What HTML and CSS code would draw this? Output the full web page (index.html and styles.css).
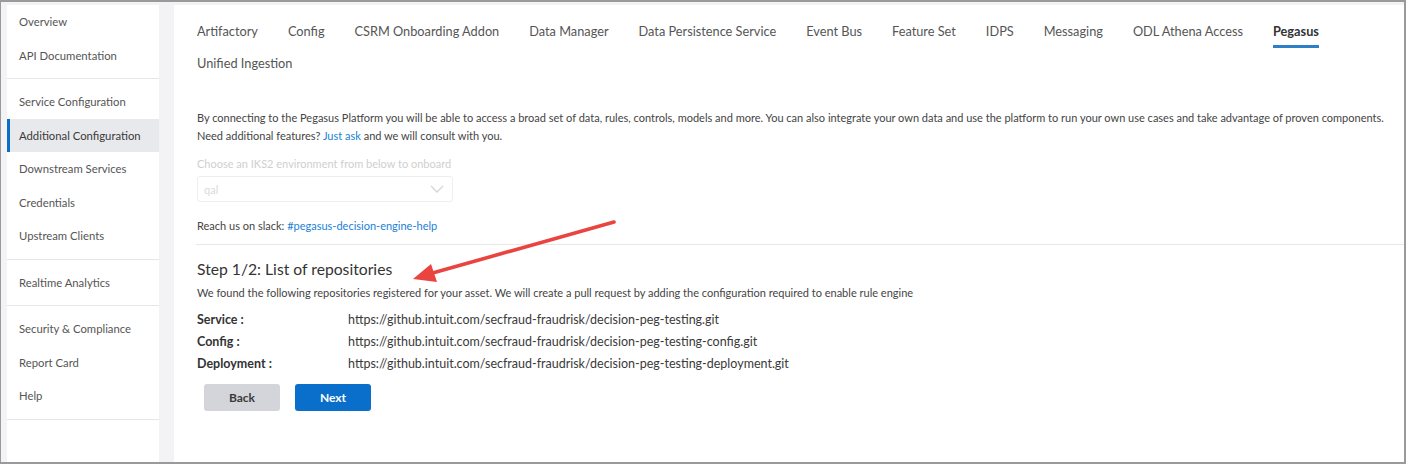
FILE: index.html
```html
<!DOCTYPE html>
<html>
<head>
<meta charset="utf-8">
<link rel="stylesheet" href="styles.css">
</head>
<body>
<div class="frame">
  <nav class="sidebar">
    <div class="group first">
      <div class="item">Overview</div>
      <div class="item">API Documentation</div>
    </div>
    <div class="group">
      <div class="item">Service Configuration</div>
      <div class="item active">Additional Configuration</div>
      <div class="item">Downstream Services</div>
      <div class="item">Credentials</div>
      <div class="item">Upstream Clients</div>
    </div>
    <div class="group">
      <div class="item">Realtime Analytics</div>
    </div>
    <div class="group">
      <div class="item">Security &amp; Compliance</div>
      <div class="item">Report Card</div>
      <div class="item">Help</div>
    </div>
  </nav>
  <main class="main">
    <div class="tabs">
      <span class="tab">Artifactory</span>
      <span class="tab">Config</span>
      <span class="tab">CSRM Onboarding Addon</span>
      <span class="tab">Data Manager</span>
      <span class="tab">Data Persistence Service</span>
      <span class="tab">Event Bus</span>
      <span class="tab">Feature Set</span>
      <span class="tab">IDPS</span>
      <span class="tab">Messaging</span>
      <span class="tab">ODL Athena Access</span>
      <span class="tab active">Pegasus</span>
      <span class="tab">Unified Ingestion</span>
    </div>
    <div class="content">
      <p class="intro">By connecting to the Pegasus Platform you will be able to access a broad set of data, rules, controls, models and more. You can also integrate your own data and use the platform to run your own use cases and take advantage of proven components.<br>Need additional features? <a class="link">Just ask</a> and we will consult with you.</p>
      <div class="field-label">Choose an IKS2 environment from below to onboard</div>
      <div class="select">
        <span>qal</span>
        <svg class="chev" width="14" height="8" viewBox="0 0 14 8"><path d="M1 1 L7 7 L13 1" fill="none" stroke="#d6d6d6" stroke-width="1.4"/></svg>
      </div>
      <div class="slack">Reach us on slack: <a class="link">#pegasus-decision-engine-help</a></div>
    </div>
    <div class="divider"></div>
    <div class="content step">
      <h2 class="step-title">Step 1/2: List of repositories</h2>
      <p class="step-desc">We found the following repositories registered for your asset. We will create a pull request by adding the configuration required to enable rule engine</p>
      <div class="repos">
        <div class="repo"><span class="repo-label">Service :</span><span class="repo-url">https://github.intuit.com/secfraud-fraudrisk/decision-peg-testing.git</span></div>
        <div class="repo"><span class="repo-label">Config :</span><span class="repo-url">https://github.intuit.com/secfraud-fraudrisk/decision-peg-testing-config.git</span></div>
        <div class="repo"><span class="repo-label">Deployment :</span><span class="repo-url">https://github.intuit.com/secfraud-fraudrisk/decision-peg-testing-deployment.git</span></div>
      </div>
      <div class="buttons">
        <button class="btn back">Back</button>
        <button class="btn next">Next</button>
      </div>
    </div>
  </main>
  <svg class="arrow" width="1406" height="464" viewBox="0 0 1406 464">
    <line x1="613" y1="220" x2="428" y2="272" stroke="#ea4440" stroke-width="3.6" stroke-linecap="round"/>
    <polygon points="412,277 430,262 436,280" fill="#ea4440"/>
  </svg>
</div>
</body>
</html>
```

FILE: styles.css
```css
* { box-sizing: border-box; }
html, body { margin: 0; padding: 0; }
body {
  font-family: Lato, "Open Sans", sans-serif;
  color: #444;
  background: #fff;
}
.frame {
  position: relative;
  width: 1406px;
  height: 464px;
  border: 1px solid #9a9a9a;
  border-width: 2px 2px 2px 1px;
  background: #f3f3f5;
  display: flex;
  padding: 3px 0 0 6px;
  gap: 15px;
  overflow: hidden;
}
.sidebar {
  width: 152px;
  background: #fff;
  flex-shrink: 0;
}
.group {
  padding: 6px 0;
  border-bottom: 1px solid #e6e6e8;
}
.group.first { padding-top: 0; }
.item {
  height: 33.5px;
  display: flex;
  align-items: center;
  padding-left: 9px;
  font-size: 11.3px;
  color: #555;
  border-left: 3px solid transparent;
}
.item.active {
  background: #e8e9ec;
  border-left-color: #0a6fc4;
  color: #3a3a3a;
}
.main {
  flex: 1;
  background: #fff;
  min-width: 0;
}
.tabs {
  display: flex;
  flex-wrap: wrap;
  column-gap: 30px;
  padding: 11px 60px 0 23px;
}
.tab {
  height: 32px;
  line-height: 30px;
  font-size: 12.75px;
  color: #555;
  border-bottom: 3px solid transparent;
}
.tab.active {
  color: #333;
  font-weight: bold;
  border-bottom-color: #2f7fc6;
}
.content { padding-left: 23px; }
.intro {
  margin: 29px 0 0;
  font-size: 11px;
  line-height: 18px;
  color: #444;
}
.link { color: #1a7fd6; text-decoration: none; }
.field-label {
  margin-top: 11px;
  font-size: 11px;
  color: #cfcfcf;
  line-height: 16px;
}
.select {
  margin-top: 4px;
  width: 256px;
  height: 26px;
  border: 1px solid #eeeeee;
  border-radius: 3px;
  display: flex;
  align-items: center;
  justify-content: space-between;
  padding: 0 8px 0 6px;
  font-size: 11px;
  color: #dadada;
}
.slack {
  margin-top: 16px;
  font-size: 11px;
  line-height: 16px;
  color: #444;
}
.divider {
  margin-top: 10px;
  margin-left: 22px;
  border-top: 1px solid #e8e8e8;
}
.step-title {
  margin: 14px 0 0;
  font-size: 15.7px;
  font-weight: normal;
  color: #333;
  line-height: 20px;
}
.step-desc {
  margin: 7px 0 0;
  font-size: 11px;
  line-height: 14px;
  color: #444;
}
.repos { margin-top: 8px; }
.repo {
  display: flex;
  height: 22px;
  align-items: center;
  font-size: 12.5px;
  color: #333;
}
.repo-label {
  width: 151px;
  font-weight: bold;
}
.repo-url { color: #3a3a3a; }
.buttons {
  display: flex;
  gap: 15px;
  margin-top: 10px;
  padding-left: 7px;
}
.btn {
  width: 76px;
  height: 27px;
  border: none;
  border-radius: 3px;
  font-family: inherit;
  font-size: 12px;
  font-weight: bold;
}
.btn.back { background: #d4d5da; color: #3a3a3a; }
.btn.next { background: #0a6fca; color: #fff; }
.arrow {
  position: absolute;
  left: 0;
  top: 0;
  pointer-events: none;
}
```
